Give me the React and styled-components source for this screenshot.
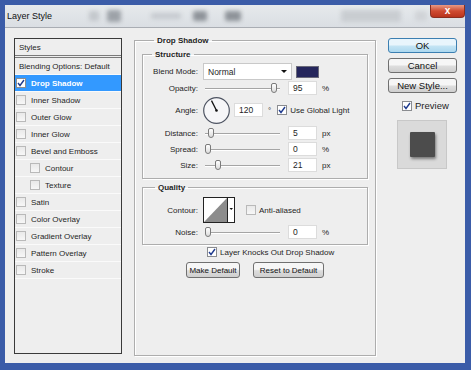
import React from 'react';
import styled, { createGlobalStyle, css } from 'styled-components';

// Photoshop "Layer Style" dialog, Drop Shadow page

const GlobalStyle = createGlobalStyle`
  body {
    margin: 0;
    font-family: "Liberation Sans", Arial, sans-serif;
    font-size: 8px;
    color: #1e1e1e;
    background: #3b5ca8;
  }
`

const Window = styled.div`
  box-sizing: border-box;
  width: 471px;
  height: 370px;
  border-style: solid;
  border-color: #3b5ca8;
  border-width: 5px 6px 7px 5px;
  background: #eeeeee;
  display: flex;
  flex-direction: column;
`

const TitleBar = styled.div`
  height: 22px;
  flex: none;
  display: flex;
  align-items: flex-start;
  background: linear-gradient(#e6e9ec, #dadee3);
  border-bottom: 1px solid #a9adb3;
`

const Title = styled.div`
  line-height: 22px;
  padding-left: 2px;
  font-size: 9px;
  color: #111;
  width: 60px;
`

const Blur = styled.span`
  height: ${p => p.h || 10}px;
  width: ${p => p.w}px;
  margin: ${p => p.top || 6}px 0 0 ${p => p.left}px;
  background: ${p => p.c || '#a9aeb4'};
  filter: blur(2px);
  border-radius: 2px;
`

const CloseBtn = styled.div`
  margin-left: auto;
  box-sizing: border-box;
  width: 35px;
  height: 13px;
  border: 1px solid #8a2e1f;
  border-top: none;
  border-radius: 0 0 4px 4px;
  background: linear-gradient(#e79a86, #cf4b31 50%, #b9341d);
  color: #fff;
  font-weight: bold;
  font-size: 10px;
  line-height: 11px;
  text-align: center;
`

const Body = styled.div`
  flex: 1;
  display: flex;
  padding: 10px 0 0 9px;
  gap: 12px;
`

const StyleList = styled.div`
  box-sizing: border-box;
  width: 108px;
  height: 316px;
  border: 1px solid #3a3a3a;
  background: #eeeeee;
`

const ListHeader = styled.div`
  height: 16px;
  line-height: 17px;
  padding-left: 4px;
  border-bottom: 3px double #7a7a7a;
`

const ListRow = styled.div`
  box-sizing: border-box;
  height: 17px;
  display: flex;
  align-items: center;
  gap: 5px;
  padding-left: ${p => (p.$sub ? 15 : p.$plain ? 4 : 1)}px;
  border-bottom: 1px solid #fafafa;
  ${p => p.$selected && css`
    background: #3399ff;
    color: #fff;
    font-weight: bold;
  `}
`

const Box = styled.span`
  box-sizing: border-box;
  flex: none;
  width: 10px;
  height: 10px;
  border: 1px solid ${p => (p.$checked ? '#8a8c90' : '#b9b9b9')};
  background: ${p => (p.$checked ? '#fff' : 'linear-gradient(#e9e9e9, #f7f7f7)')};
  display: flex;
  align-items: center;
  justify-content: center;
`

function Check({ checked }) {
  return (
    <Box $checked={checked}>
      {checked && (
        <svg width="8" height="8" viewBox="0 0 8 8">
          <path d="M1 4 L3 6.5 L7 1" fill="none" stroke="#1f3b8f" strokeWidth="1.4" />
        </svg>
      )}
    </Box>
  )
}

const Main = styled.fieldset`
  box-sizing: border-box;
  width: 242px;
  height: 321px;
  margin: -3px 0 0 0;
  padding: 3px 7px 0 7px;
  border: 1px solid #adadad;
  box-shadow: inset 1px 1px 0 #fff, 1px 1px 0 #fff;
  display: flex;
  flex-direction: column;
`

const Group = styled.fieldset`
  margin: ${p => p.$mt || 0}px 0 0 0;
  padding: 3px 0 ${p => p.$pb || 4}px 0;
  border: 1px solid #adadad;
  box-shadow: inset 1px 1px 0 #fff, 1px 1px 0 #fff;
  min-width: 0;
`

const Legend = styled.legend`
  font-weight: bold;
  padding: 0 3px;
  margin-left: ${p => p.$ml}px;
  line-height: 11px;
`

const Row = styled.div`
  height: ${p => p.h}px;
  display: flex;
  align-items: center;
`

const Label = styled.span`
  width: 55px;
  flex: none;
  text-align: right;
  padding-right: 5px;
`

const Select = styled.div`
  box-sizing: border-box;
  width: 89px;
  height: 17px;
  background: #fff;
  border: 1px solid #c9c9c9;
  display: flex;
  align-items: center;
  justify-content: space-between;
  padding: 0 4px;
  font-size: 8.5px;
`

const Arrow = styled.span`
  width: 0;
  height: 0;
  border-left: 3px solid transparent;
  border-right: 3px solid transparent;
  border-top: 3px solid #111;
`

const Swatch = styled.span`
  margin-left: 4px;
  width: 23px;
  height: 12px;
  box-sizing: border-box;
  border: 1px solid #6a6a7a;
  background: #25265c;
`

const Track = styled.div`
  position: relative;
  margin-left: 2px;
  width: 75px;
  height: 11px;
  &::before {
    content: '';
    position: absolute;
    left: 0;
    right: 0;
    top: 5px;
    height: 1px;
    background: #a5a5a5;
    border-bottom: 1px solid #fff;
  }
`

const Thumb = styled.span`
  position: absolute;
  top: 0;
  box-sizing: border-box;
  width: 6px;
  height: 10px;
  border: 1px solid #7a7a7a;
  border-radius: 2px 2px 3px 3px;
  background: linear-gradient(#fff, #dcdcdc);
`

const Field = styled.span`
  box-sizing: border-box;
  margin-left: ${p => p.ml || 8}px;
  width: 29px;
  height: 14px;
  line-height: 12px;
  padding-left: 4px;
  background: #fff;
  border: 1px solid #dcdcdc;
  font-size: 8.5px;
`

const Unit = styled.span`
  margin-left: 5px;
`

const CheckLabel = styled.label`
  display: flex;
  align-items: center;
  gap: 3px;
  margin-left: ${p => p.ml || 0}px;
  margin-top: ${p => p.mt || 0}px;
  font-size: ${p => p.fs || 8}px;
`

function Slider({ value, max }) {
  const left = (value / max) * (75 - 6);
  return (
    <Track>
      <Thumb style={{ left }} />
    </Track>
  )
}

function SliderRow({ label, value, max, unit, h }) {
  return (
    <Row h={h}>
      <Label>{label}</Label>
      <Slider value={value} max={max} />
      <Field>{value}</Field>
      <Unit>{unit}</Unit>
    </Row>
  )
}

function Dial() {
  return (
    <svg width="27" height="27" viewBox="0 0 27 27">
      <circle cx="13.5" cy="13.5" r="12.8" fill="#f6f6f8" stroke="#4f5563" strokeWidth="1.2" />
      <line x1="13.5" y1="13.5" x2="8.5" y2="3.6" stroke="#111" strokeWidth="1.3" />
      <circle cx="13.5" cy="13.5" r="1.3" fill="#111" />
    </svg>
  )
}

function ContourPicker() {
  return (
    <svg width="32" height="26" viewBox="0 0 32 26">
      <rect x="0.5" y="0.5" width="31" height="25" fill="#fff" stroke="#222" />
      <polygon points="1,25 24,1 24,25" fill="#8c8c8c" />
      <line x1="24.5" y1="0.5" x2="24.5" y2="25.5" stroke="#222" />
      <polygon points="26.5,11 30,11 28.25,13" fill="#111" />
    </svg>
  )
}

const KnockRow = styled.div`
  height: 14px;
  display: flex;
  align-items: center;
  margin: 0 0 0 65px;
`

const ButtonRow = styled.div`
  display: flex;
  justify-content: center;
  gap: 13px;
  margin-top: 3px;
`

const Btn = styled.button`
  box-sizing: border-box;
  width: ${p => p.w}px;
  height: ${p => p.h || 16}px;
  padding: 0;
  font-family: inherit;
  font-size: ${p => p.fs || 8}px;
  color: #111;
  border: 1px solid #707070;
  border-radius: 3px;
  background: linear-gradient(#f6f6f6 45%, #dddddd 55%, #cfcfcf);
  ${p => p.$primary && css`
    border-color: #3c7fb1;
    background: linear-gradient(#e9f5fc 45%, #c4e4f4 55%, #acd8ef);
  `}
`

const Side = styled.div`
  width: 69px;
  display: flex;
  flex-direction: column;
  gap: 5px;
`

const PreviewBox = styled.div`
  box-sizing: border-box;
  margin: 4px 0 0 9px;
  width: 50px;
  height: 49px;
  background: #dadada;
  border: 1px solid #c8c8c8;
  display: flex;
  align-items: center;
  justify-content: center;
`

const PreviewSquare = styled.div`
  width: 25px;
  height: 25px;
  background: #4c4c4c;
  border-radius: 1px;
  box-shadow: 1px 2px 3px rgba(0, 0, 0, 0.45);
`

const styleItems = [
  { label: 'Drop Shadow', checked: true, selected: true },
  { label: 'Inner Shadow' },
  { label: 'Outer Glow' },
  { label: 'Inner Glow' },
  { label: 'Bevel and Emboss' },
  { label: 'Contour', sub: true },
  { label: 'Texture', sub: true },
  { label: 'Satin' },
  { label: 'Color Overlay' },
  { label: 'Gradient Overlay' },
  { label: 'Pattern Overlay' },
  { label: 'Stroke' },
]

export default function App() {
  return (
    <>
      <GlobalStyle />
      <Window>
        <TitleBar>
          <Title>Layer Style</Title>
          <Blur left={22} w={10} c="#c3c7cc" />
          <Blur left={8} w={14} h={12} top={5} c="#9da2a8" />
          <Blur left={30} w={30} h={6} top={8} c="#c6cacf" />
          <Blur left={12} w={14} c="#8e9399" />
          <Blur left={18} w={16} c="#8e9399" />
          <Blur left={100} w={60} h={12} top={5} c="#c9cdd1" />
          <Blur left={14} w={12} c="#d0d3d7" />
          <CloseBtn>x</CloseBtn>
        </TitleBar>
        <Body>
          <StyleList>
            <ListHeader>Styles</ListHeader>
            <ListRow $plain>Blending Options: Default</ListRow>
            {styleItems.map(item => (
              <ListRow key={item.label} $sub={item.sub} $selected={item.selected}>
                <Check checked={item.checked} />
                {item.label}
              </ListRow>
            ))}
          </StyleList>

          <Main>
            <Legend $ml={12}>Drop Shadow</Legend>
            <Group>
              <Legend $ml={9}>Structure</Legend>
              <Row h={17}>
                <Label>Blend Mode:</Label>
                <Select>Normal<Arrow /></Select>
                <Swatch />
              </Row>
              <SliderRow label="Opacity:" value={95} max={100} unit="%" h={16} />
              <Row h={28}>
                <Label>Angle:</Label>
                <Dial />
                <Field ml={4}>120</Field>
                <Unit>°</Unit>
                <CheckLabel ml={6}>
                  <Check checked />
                  Use Global Light
                </CheckLabel>
              </Row>
              <SliderRow label="Distance:" value={5} max={120} unit="px" h={18} />
              <SliderRow label="Spread:" value={0} max={100} unit="%" h={14} />
              <SliderRow label="Size:" value={21} max={140} unit="px" h={18} />
            </Group>
            <Group $mt={3}>
              <Legend $ml={12}>Quality</Legend>
              <Row h={28}>
                <Label>Contour:</Label>
                <ContourPicker />
                <CheckLabel ml={11}>
                  <Check />
                  Anti-aliased
                </CheckLabel>
              </Row>
              <SliderRow label="Noise:" value={0} max={100} unit="%" h={16} />
            </Group>
            <KnockRow>
              <CheckLabel>
                <Check checked />
                Layer Knocks Out Drop Shadow
              </CheckLabel>
            </KnockRow>
            <ButtonRow>
              <Btn w={54}>Make Default</Btn>
              <Btn w={71}>Reset to Default</Btn>
            </ButtonRow>
          </Main>

          <Side>
            <Btn $primary w={69} h={15} fs={9.5}>OK</Btn>
            <Btn w={69} h={15} fs={9.5}>Cancel</Btn>
            <Btn w={69} h={15} fs={9.5}>New Style...</Btn>
            <CheckLabel ml={14} mt={2} fs={9.5}>
              <Check checked />
              Preview
            </CheckLabel>
            <PreviewBox>
              <PreviewSquare />
            </PreviewBox>
          </Side>
        </Body>
      </Window>
    </>
  )
}
